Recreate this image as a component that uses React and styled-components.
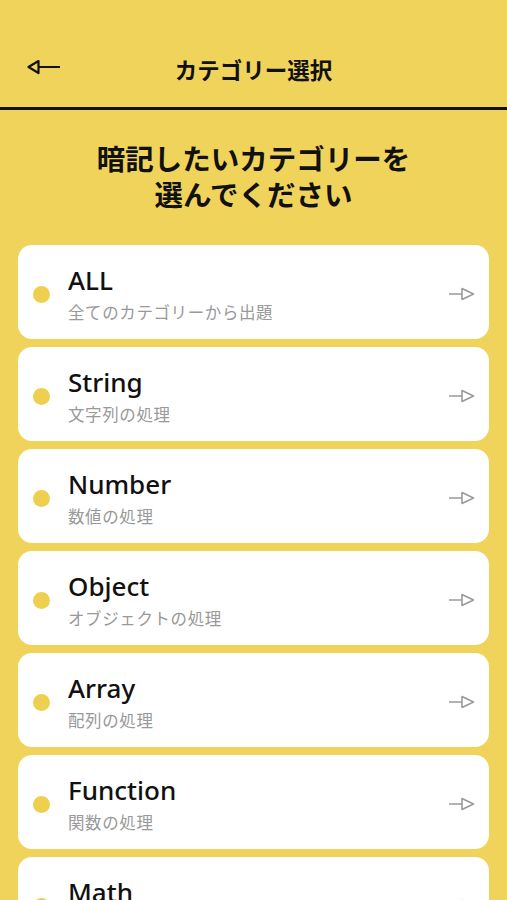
import React from "react";
import styled, { createGlobalStyle } from "styled-components";

const categories = [
  { name: "ALL", desc: "全てのカテゴリーから出題" },
  { name: "String", desc: "文字列の処理" },
  { name: "Number", desc: "数値の処理" },
  { name: "Object", desc: "オブジェクトの処理" },
  { name: "Array", desc: "配列の処理" },
  { name: "Function", desc: "関数の処理" },
  { name: "Math", desc: "数学の処理" },
];

const App = () => {
  return (
    <Page>
      <GlobalStyle />
      <Header>
        <BackButton aria-label="back">
          <svg width="34" height="16" viewBox="0 0 34 16">
            <path
              d="M11.5 2 L1.5 8 L11.5 14 Z M11.5 8 H33"
              fill="none"
              stroke="#111"
              strokeWidth="2.2"
              strokeLinejoin="round"
            />
          </svg>
        </BackButton>
        <Title>カテゴリー選択</Title>
      </Header>
      <Heading>
        暗記したいカテゴリーを
        <br />
        選んでください
      </Heading>
      <List>
        {categories.map((c) => (
          <Card key={c.name}>
            <Dot />
            <Texts>
              <Name>{c.name}</Name>
              <Desc>{c.desc}</Desc>
            </Texts>
            <svg width="26" height="14" viewBox="0 0 26 14">
              <path
                d="M0 7 H13 M13 1.5 L24.5 7 L13 12.5 Z"
                fill="none"
                stroke="#9a9a9a"
                strokeWidth="1.6"
                strokeLinejoin="round"
              />
            </svg>
          </Card>
        ))}
      </List>
    </Page>
  );
};

export default App;

const GlobalStyle = createGlobalStyle`
  body {
    margin: 0;
    background: #f0d35a;
    font-family: "Noto Sans", "Noto Sans CJK JP", sans-serif;
  }
`;

const Page = styled.div`
  height: 900px;
  background: #f0d35a;
  overflow: hidden;
`;

const Header = styled.header`
  position: relative;
  height: 77px;
  padding-top: 30px;
  display: flex;
  align-items: center;
  justify-content: center;
  border-bottom: 3px solid #111;
`;

const BackButton = styled.div`
  position: absolute;
  left: 27px;
  top: 59px;
  display: flex;
`;

const Title = styled.h1`
  margin: 0;
  font-size: 22.5px;
  font-weight: 700;
  color: #111;
  font-family: "Noto Sans CJK JP", sans-serif;
`;

const Heading = styled.h2`
  margin: 30px 0 33px;
  text-align: center;
  font-size: 28.5px;
  line-height: 36px;
  font-weight: 700;
  color: #111;
  font-family: "Noto Sans CJK JP", sans-serif;
`;

const List = styled.div`
  display: flex;
  flex-direction: column;
  gap: 8px;
  padding: 0 18px;
`;

const Card = styled.div`
  display: flex;
  align-items: center;
  background: #fff;
  border-radius: 14px;
  padding: 18px 14px 14px 15px;
`;

const Dot = styled.span`
  flex: none;
  width: 17px;
  height: 17px;
  border-radius: 50%;
  background: #efcf4f;
  margin-right: 18px;
`;

const Texts = styled.div`
  flex: 1;
  display: flex;
  flex-direction: column;
`;

const Name = styled.div`
  font-size: 26px;
  line-height: 34px;
  font-weight: 500;
  color: #111;
`;

const Desc = styled.div`
  margin-top: 2px;
  font-size: 16.5px;
  line-height: 26px;
  color: #999;
  font-family: "Noto Sans CJK JP", sans-serif;
  letter-spacing: 0.6px;
`;
